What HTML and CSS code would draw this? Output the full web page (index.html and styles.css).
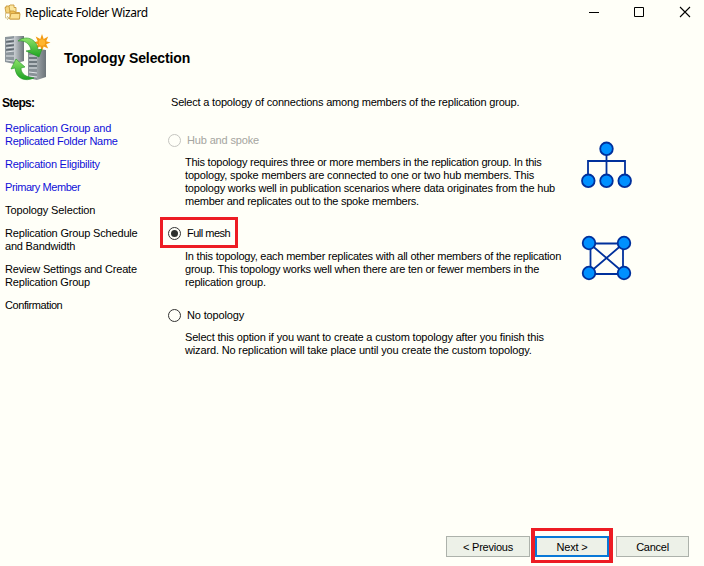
FILE: index.html
```html
<!DOCTYPE html>
<html lang="en">
<head>
<meta charset="utf-8">
<title>Replicate Folder Wizard</title>
<link rel="stylesheet" href="styles.css">
</head>
<body>
<div class="window">
  <header class="titlebar">
    <svg class="app-icon" width="17" height="17" viewBox="0 0 17 17">
      <g stroke="#c99a3c" stroke-width=".9">
        <path d="M1 3.500h1V2h4l1 1.500h3V9H2z" fill="#f5d47c"/>
        <path d="M5 2l1-1h4v2.500h2V8H6z" fill="#fbe7a0"/>
        <path d="M6 8.500V7h4l1 1.500h4.500V15H6z" fill="#f0c055"/>
        <path d="M5.500 15L7 9.500h9L15.500 15z" fill="#fce092"/>
      </g>
      <path d="M1.500 9v5h3M3 12l2 2-2 2" fill="none" stroke="#d6c58f"/>
    </svg>
    <span class="caption">Replicate Folder Wizard</span>
    <svg class="controls" width="104" height="14" viewBox="0 0 104 14" fill="none" stroke="#000">
      <path d="M0 7.500h10M45.500 2.500h9v9h-9z"/>
      <path d="M91 2l10 10M101 2L91 12" stroke-width="1.100"/>
    </svg>
  </header>
  <div class="banner">
    <svg class="banner-icon" width="46" height="48" viewBox="0 0 46 48">
      <defs>
        <linearGradient id="side" x1="0" x2="1"><stop offset="0" stop-color="#c9ced2"/><stop offset="1" stop-color="#6c7479"/></linearGradient>
        <linearGradient id="leaf" x1="0" x2="0" y1="0" y2="1"><stop offset="0" stop-color="#8ee36a"/><stop offset="1" stop-color="#1da321"/></linearGradient>
      </defs>
      <path d="M0 3l9-1v28l-9-2z" fill="#8d969c"/>
      <path d="M9 2h10v25L9 30z" fill="url(#side)"/>
      <path d="M1 6l8-1M1 10l8-1M1 14l8-1M1 18l8-1M1 22l8 0M1 26l8 1" stroke="#e3e7ea"/>
      <path d="M1 8l8-1M1 12l8-1M1 16l8-1" stroke="#555e65"/>
      <path d="M23 17l9 1v28l-9-2z" fill="#899197"/>
      <path d="M23 17l11-2 7 1v27l-9 3V18z" fill="url(#side)"/>
      <path d="M24 22l8 0M24 26l8 0M24 30l8 0M24 34l8 0M24 38l8 1M24 42l8 1" stroke="#e3e7ea"/>
      <path d="M24 24h8M24 28h8M24 32h8" stroke="#555e65"/>
      <path d="M37 0l1.700 5 4.500-2.500-2 4.700 4.300 1.300-4.300 1.700 2 4.300-4.500-1.900L37 17l-1.700-4.400-4.600 1.900 2-4.300-4.700-1.700 4.700-1.300-2-4.700L35.300 5z" fill="#f39b12"/>
      <circle cx="37" cy="8.500" r="3.200" fill="#ffb52e"/>
      <path d="M13 7C20 1 32 4 33 16l4-1-3 8-13-6 5-1C25 10 20 6 13 7z" fill="url(#leaf)" stroke="#239227" stroke-width=".6"/>
      <path d="M29 44c-9 4-18 1-19-10l-4 1L11 25l9 8-4 1c0 6 5 9 13 10z" fill="url(#leaf)" stroke="#239227" stroke-width=".6"/>
    </svg>
    <h1 class="heading">Topology Selection</h1>
  </div>
  <div class="body">
    <nav class="steps">
      <h2 class="steps-title">Steps:</h2>
      <ul class="step-list">
        <li class="step done"><span class="line a1">Replication Group and</span><span class="line a2">Replicated Folder Name</span></li>
        <li class="step done"><span class="line a3">Replication Eligibility</span></li>
        <li class="step done"><span class="line a4">Primary Member</span></li>
        <li class="step"><span class="line a5">Topology Selection</span></li>
        <li class="step"><span class="line a6">Replication Group Schedule</span><span class="line a7">and Bandwidth</span></li>
        <li class="step"><span class="line a8">Review Settings and Create</span><span class="line a9">Replication Group</span></li>
        <li class="step"><span class="line a10">Confirmation</span></li>
      </ul>
    </nav>
    <main class="content">
      <p class="intro"><span class="line b1">Select a topology of connections among members of the replication group.</span></p>
      <section class="option hub-option">
        <div class="choice disabled"><i class="radio"></i><span class="line b2">Hub and spoke</span></div>
        <p class="desc"><span class="line b3">This topology requires three or more members in the replication group. In this</span><span class="line b4">topology, spoke members are connected to one or two hub members. This</span><span class="line b5">topology works well in publication scenarios where data originates from the hub</span><span class="line b6">member and replicates out to the spoke members.</span></p>
      </section>
      <section class="option mesh-option">
        <div class="choice marked"><i class="radio on"></i><span class="line b7">Full mesh</span></div>
        <p class="desc"><span class="line b8">In this topology, each member replicates with all other members of the replication</span><span class="line b9">group. This topology works well when there are ten or fewer members in the</span><span class="line b10">replication group.</span></p>
      </section>
      <section class="option last">
        <div class="choice"><i class="radio"></i><span class="line b11">No topology</span></div>
        <p class="desc"><span class="line b12">Select this option if you want to create a custom topology after you finish this</span><span class="line b13">wizard. No replication will take place until you create the custom topology.</span></p>
      </section>
    </main>
    <aside class="diagrams">
      <svg class="hub" width="52" height="48" viewBox="0 0 52 48" fill="#0090ff" stroke="#00309c" stroke-width="1.800">
        <path d="M7 40V20H44V40M25.500 8V40" fill="none"/>
        <circle cx="25.500" cy="7.800" r="6.300"/><circle cx="7.300" cy="39.800" r="6.300"/><circle cx="25.500" cy="39.800" r="6.300"/><circle cx="43.700" cy="39.800" r="6.300"/>
      </svg>
      <svg class="mesh" width="52" height="48" viewBox="0 0 52 48" fill="#0090ff" stroke="#00309c" stroke-width="1.800">
        <path d="M8 8.500H43M8 39H43M9.500 8V38M42 8V38M8 8L43 38M43 8L8 38" fill="none"/>
        <circle cx="8" cy="8" r="6.300"/><circle cx="43" cy="8" r="6.300"/><circle cx="8" cy="38" r="6.300"/><circle cx="43" cy="38" r="6.300"/>
      </svg>
    </aside>
  </div>
  <footer class="actions">
    <button class="btn prev"><span class="c1">&lt; Previous</span></button>
    <span class="frame"><button class="btn next"><span class="c2">Next &gt;</span></button></span>
    <button class="btn cancel"><span class="c3">Cancel</span></button>
  </footer>
</div>
</body>
</html>
```
FILE: styles.css
```css
* { box-sizing: border-box; margin: 0; padding: 0; }
body { background: #fffff8; color: #000; font: 11px/13px "Liberation Sans", Arial, sans-serif; }
.window { width: 704px; height: 566px; display: flex; flex-direction: column; overflow: hidden; }
.titlebar { height: 28px; display: flex; align-items: flex-start; padding: 5px 11px 0 4px; }
.app-icon { margin-top: -1px; }
.caption { font: 12px/16px "Noto Sans", "Open Sans", sans-serif; letter-spacing: -.4px; margin-left: 4px; }
.controls { margin-left: auto; }
.banner { height: 62px; display: flex; align-items: flex-start; padding: 6px 0 0 5px; }
.heading { font-size: 14px; line-height: 18px; letter-spacing: -.1px; margin: 15px 0 0 13px; }
.body { height: 438px; display: grid; grid-template-columns: 160px 421px 1fr; }
.line { display: block; white-space: nowrap; }
.steps { padding: 7px 0 0 2px; }
.steps-title { font-size: 12px; line-height: 13px; letter-spacing: -.75px; }
.step-list { list-style: none; padding: 12px 0 0 3px; display: flex; flex-direction: column; gap: 10px; }
.done { color: #1010d8; }
.content { padding-top: 6px; }
.intro { padding-left: 11px; }
.hub-option { margin-top: 15px; }
.mesh-option { margin-top: 9px; }
.last { margin-top: 11px; }
.choice { width: 78px; height: 31px; display: flex; align-items: center; gap: 6px; padding-left: 8px; border: 0 solid #ed1c24; }
.marked { border-width: 3px; padding: 2px 0 0 5px; }
.disabled { padding-top: 1px; color: #a5a5a0; }
.radio { flex: none; width: 13px; height: 13px; border: 1px solid #333; border-radius: 50%; display: grid; place-items: center; }
.disabled .radio { border-color: #c5c5c0; }
.on::after { content: ""; width: 7px; height: 7px; border-radius: 50%; background: #2d302d; }
.desc { padding-left: 25px; }
.hub-option .desc { margin-top: 1px; }
.mesh-option .desc { margin-top: 2px; }
.hub { display: block; margin-top: 51px; }
.mesh { display: block; margin-top: 46px; }
.actions { display: flex; align-items: flex-start; height: 35px; padding-left: 446px; }
.btn { height: 21px; background: #edf1e8; border: 1px solid #adb2ab; font: inherit; color: #000; padding-top: 1px; }
.prev { width: 84px; margin-top: 8px; }
.frame { display: flex; height: 35px; border: solid #ed1c24; border-width: 3px 4px; margin: 0 3px 0 1px; padding: 5px 0 3px; }
.next { width: 74px; border: 2px solid #0878d7; }
.cancel { width: 73px; margin-top: 8px; }

/* Per-line tracking keeps the dialog's text widths */
.a1 { letter-spacing: -.16px; }
.a2 { letter-spacing: -.27px; }
.a3 { letter-spacing: -.24px; }
.a4 { letter-spacing: -.43px; }
.a5 { letter-spacing: -.11px; }
.a6 { letter-spacing: -.17px; }
.a7 { letter-spacing: -.2px; }
.a8 { letter-spacing: -.17px; }
.a9 { letter-spacing: -.18px; }
.a10 { letter-spacing: -.42px; }
.b1 { letter-spacing: -.19px; }
.b2 { letter-spacing: -.15px; }
.b3 { letter-spacing: -.25px; }
.b4 { letter-spacing: -.18px; }
.b5 { letter-spacing: -.2px; }
.b6 { letter-spacing: -.24px; }
.b7 { letter-spacing: -.5px; }
.b8 { letter-spacing: -.22px; }
.b9 { letter-spacing: -.21px; }
.b10 { letter-spacing: -.2px; }
.b11 { letter-spacing: -.15px; }
.b12 { letter-spacing: -.17px; }
.b13 { letter-spacing: -.15px; }
.c1 { letter-spacing: -.25px; }
.c2 { letter-spacing: -.2px; }
.c3 { letter-spacing: -.25px; }
```
